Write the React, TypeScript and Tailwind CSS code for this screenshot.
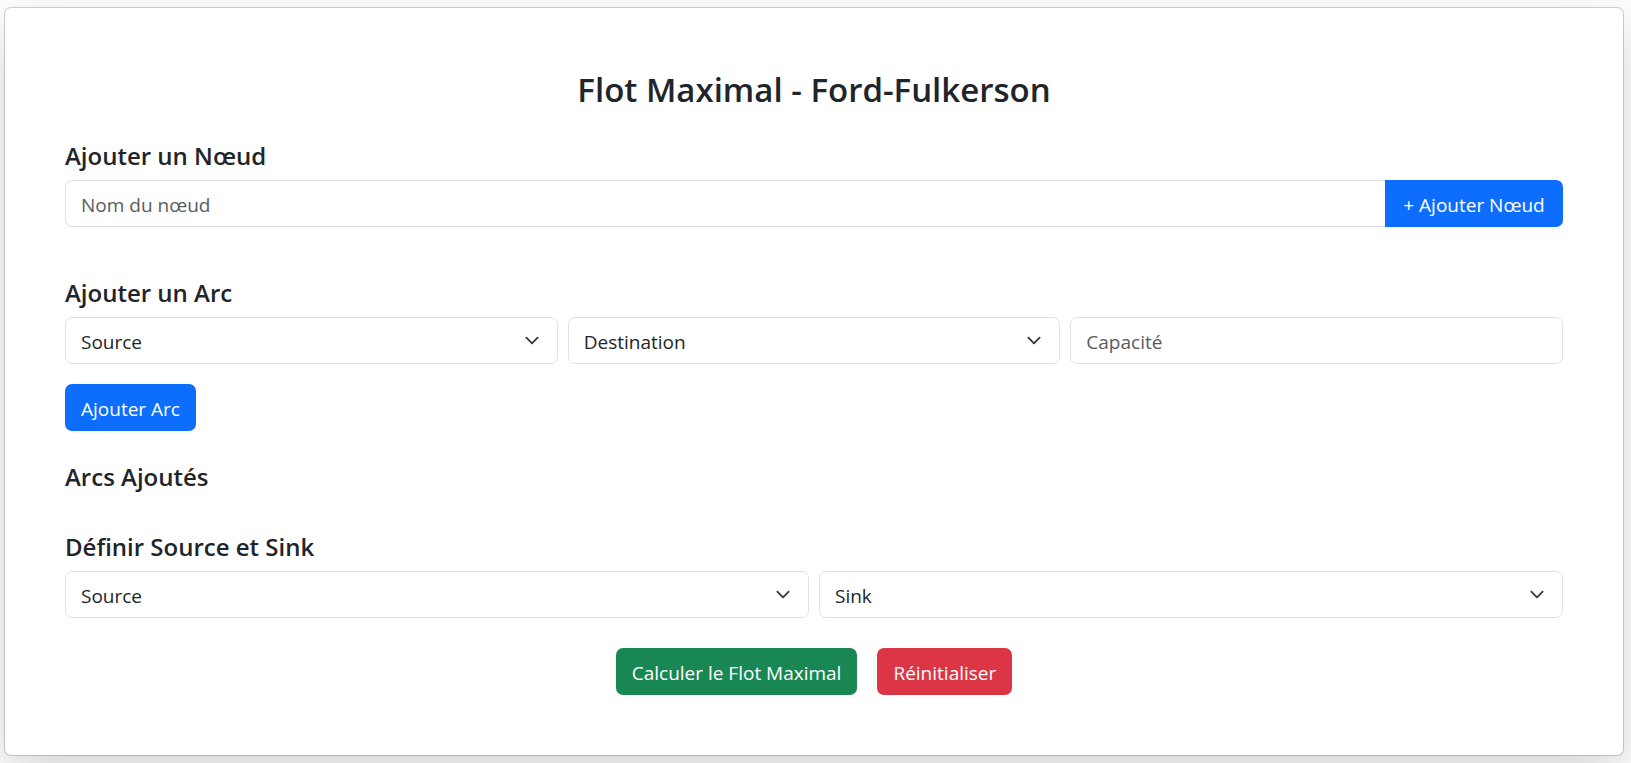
import { useState } from "react";
import type { ReactNode } from "react";

const field =
  "h-[47px] w-full min-w-0 border border-[#dee2e6] bg-white px-[15px] pt-0.5 text-[19px] leading-[30px] text-[#212529] placeholder:text-[#595c5f] outline-none focus:border-[#86b7fe]";
const button = "h-[47px] cursor-pointer px-4 pt-0.5 text-[19px] leading-[30px] whitespace-nowrap text-white";

function Heading({ children }: { children: ReactNode }) {
  return <h2 className="mb-2 text-[24px] leading-8 font-semibold">{children}</h2>;
}

type SelectProps = {
  label: string;
  placeholder: string;
  options: string[];
  value: string;
  onChange: (value: string) => void;
};

function Select({ label, placeholder, options, value, onChange }: SelectProps) {
  return (
    <div className="relative min-w-0 flex-1">
      <select
        aria-label={label}
        value={value}
        onChange={(e) => onChange(e.target.value)}
        className={`${field} appearance-none rounded-[7px]`}
      >
        <option value="">{placeholder}</option>
        {options.map((o) => (
          <option key={o}>{o}</option>
        ))}
      </select>
      <svg
        viewBox="0 0 16 16"
        className="pointer-events-none absolute inset-y-0 right-4 my-auto h-[15px] w-5"
        fill="none"
        stroke="#343a40"
        strokeWidth="2"
        strokeLinecap="round"
        strokeLinejoin="round"
        aria-hidden="true"
      >
        <path d="m2 5 6 6 6-6" />
      </svg>
    </div>
  );
}

export default function App() {
  const [name, setName] = useState("");
  const [nodes, setNodes] = useState<string[]>([]);
  const [from, setFrom] = useState("");
  const [to, setTo] = useState("");
  const [capacity, setCapacity] = useState("");
  const [arcs, setArcs] = useState<string[]>([]);
  const [source, setSource] = useState("");
  const [sink, setSink] = useState("");

  const addNode = () => {
    const n = name.trim();
    if (n && !nodes.includes(n)) setNodes([...nodes, n]);
    setName("");
  };
  const addArc = () => {
    if (!from || !to || !capacity) return;
    setArcs([...arcs, `${from} → ${to} (${capacity})`]);
    setCapacity("");
  };
  const reset = () => {
    setName("");
    setNodes([]);
    setFrom("");
    setTo("");
    setCapacity("");
    setArcs([]);
    setSource("");
    setSink("");
  };

  return (
    <div className="min-h-screen overflow-hidden bg-white py-[7px] pr-[7px] pl-1 font-['Open_Sans','Noto_Sans',sans-serif] text-[#212529]">
      <main className="rounded-[7px] border border-black/[.175] bg-white bg-clip-padding p-[60px] shadow-[0_20px_60px_rgba(0,0,0,0.175)]">
        <h1 className="mb-7 text-center text-[33px] leading-11 font-semibold">
          Flot Maximal - Ford-Fulkerson
        </h1>

        <section className="mb-[50px]">
          <Heading>Ajouter un Nœud</Heading>
          <div className="flex">
            <input
              aria-label="Nom du nœud"
              placeholder="Nom du nœud"
              value={name}
              onChange={(e) => setName(e.target.value)}
              className={`${field} flex-1 rounded-l-[7px] border-r-0`}
            />
            <button
              type="button"
              onClick={addNode}
              className={`${button} min-w-[178px] rounded-r-[7px] bg-[#0d6efd]`}
            >
              + Ajouter Nœud
            </button>
          </div>
        </section>

        <section className="mb-[30px]">
          <Heading>Ajouter un Arc</Heading>
          <div className="mb-5 flex gap-2.5">
            <Select label="Source" placeholder="Source" options={nodes} value={from} onChange={setFrom} />
            <Select label="Destination" placeholder="Destination" options={nodes} value={to} onChange={setTo} />
            <div className="min-w-0 flex-1">
              <input
                aria-label="Capacité"
                placeholder="Capacité"
                inputMode="numeric"
                value={capacity}
                onChange={(e) => setCapacity(e.target.value)}
                className={`${field} rounded-[7px]`}
              />
            </div>
          </div>
          <button type="button" onClick={addArc} className={`${button} rounded-[7px] bg-[#0d6efd]`}>
            Ajouter Arc
          </button>
        </section>

        <section className="mb-[30px] flow-root">
          <Heading>Arcs Ajoutés</Heading>
          <ul className="text-[19px] leading-[30px]">
            {arcs.map((a, i) => (
              <li key={i}>{a}</li>
            ))}
          </ul>
        </section>

        <section className="mb-[30px]">
          <Heading>Définir Source et Sink</Heading>
          <div className="flex gap-2.5">
            <Select label="Source" placeholder="Source" options={nodes} value={source} onChange={setSource} />
            <Select label="Sink" placeholder="Sink" options={nodes} value={sink} onChange={setSink} />
          </div>
        </section>

        <div className="flex justify-center gap-5">
          <button type="button" className={`${button} rounded-[7px] bg-[#198754]`}>
            Calculer le Flot Maximal
          </button>
          <button type="button" onClick={reset} className={`${button} rounded-[7px] bg-[#dc3545]`}>
            Réinitialiser
          </button>
        </div>
      </main>
    </div>
  );
}
